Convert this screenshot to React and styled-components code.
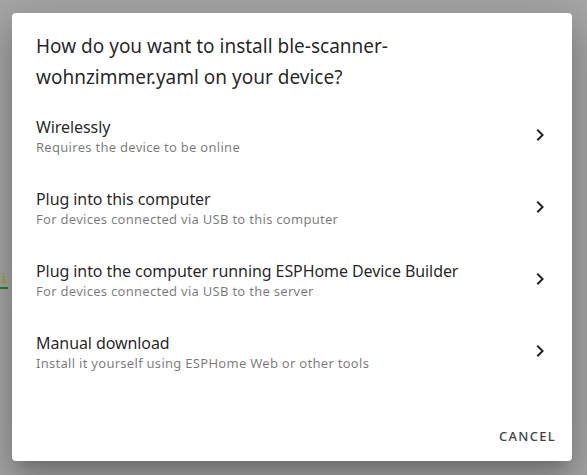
import React from "react";
import styled, { createGlobalStyle } from "styled-components";

const GlobalStyle = createGlobalStyle`
  html, body { margin: 0; padding: 0; }
  body {
    background: #a6a6a6;
    font-family: "Noto Sans", "Open Sans", sans-serif;
    -webkit-font-smoothing: antialiased;
  }
`;

const Page = styled.div`
  position: relative;
  width: 587px;
  height: 475px;
  overflow: hidden;
  padding: 13px 0 0 12px;
  box-sizing: border-box;
`;

const BackdropCode = styled.span`
  position: absolute;
  left: 0;
  top: 270px;
  font-family: "DejaVu Sans Mono", monospace;
  font-size: 13px;
  line-height: 17px;
  color: #a3a30a;
  border-bottom: 2px solid #2f7a2f;
`;

const Dialog = styled.div`
  position: relative;
  width: 560px;
  height: 448px;
  background: #fff;
  border-radius: 4px;
  box-shadow: 0 11px 15px -7px rgba(0, 0, 0, 0.2),
    0 24px 38px 3px rgba(0, 0, 0, 0.14), 0 9px 46px 8px rgba(0, 0, 0, 0.12);
  display: flex;
  flex-direction: column;
`;

const Title = styled.h2`
  margin: 0;
  padding: 18px 90px 0 24px;
  font-size: 19px;
  font-weight: 400;
  line-height: 31px;
  letter-spacing: 0;
  color: rgba(0, 0, 0, 0.87);
`;

const List = styled.ul`
  list-style: none;
  margin: 0;
  padding: 6px 0 0;
  flex: 1;
`;

const Item = styled.li`
  height: 72px;
  display: flex;
  align-items: center;
  padding: 0 20px 0 24px;
  gap: 16px;
`;

const ItemText = styled.div`
  flex: 1;
  display: flex;
  flex-direction: column;
  padding-top: 3px;
`;

const Primary = styled.span`
  font-size: 16px;
  line-height: 20px;
  color: rgba(0, 0, 0, 0.87);
  letter-spacing: -0.005em;
`;

const Secondary = styled.span`
  font-size: 13px;
  line-height: 20px;
  color: rgba(0, 0, 0, 0.54);
  letter-spacing: 0.022em;
`;

const Chevron = styled.svg`
  width: 24px;
  height: 24px;
  flex: none;
  fill: rgba(0, 0, 0, 0.87);
`;

const Actions = styled.div`
  height: 52px;
  display: flex;
  align-items: center;
  justify-content: flex-end;
  padding: 2px 8px 0;
  box-sizing: border-box;
`;

const TextButton = styled.button`
  height: 36px;
  padding: 0 8px;
  border: none;
  background: transparent;
  font-family: inherit;
  font-size: 13px;
  font-weight: 500;
  letter-spacing: 0.1em;
  text-transform: uppercase;
  color: #444;
  cursor: pointer;
`;

const options = [
  ["Wirelessly", "Requires the device to be online"],
  ["Plug into this computer", "For devices connected via USB to this computer"],
  [
    "Plug into the computer running ESPHome Device Builder",
    "For devices connected via USB to the server",
  ],
  ["Manual download", "Install it yourself using ESPHome Web or other tools"],
];

export default function App() {
  return (
    <>
      <GlobalStyle />
      <Page>
        <BackdropCode>i</BackdropCode>
        <Dialog>
          <Title>
            How do you want to install ble-scanner-wohnzimmer.yaml on your
            device?
          </Title>
          <List>
            {options.map(([p, s]) => (
              <Item key={p}>
                <ItemText>
                  <Primary>{p}</Primary>
                  <Secondary>{s}</Secondary>
                </ItemText>
                <Chevron viewBox="0 0 24 24">
                  <path d="M10 6L8.59 7.41 13.17 12l-4.58 4.59L10 18l6-6z" />
                </Chevron>
              </Item>
            ))}
          </List>
          <Actions>
            <TextButton>Cancel</TextButton>
          </Actions>
        </Dialog>
      </Page>
    </>
  );
}
